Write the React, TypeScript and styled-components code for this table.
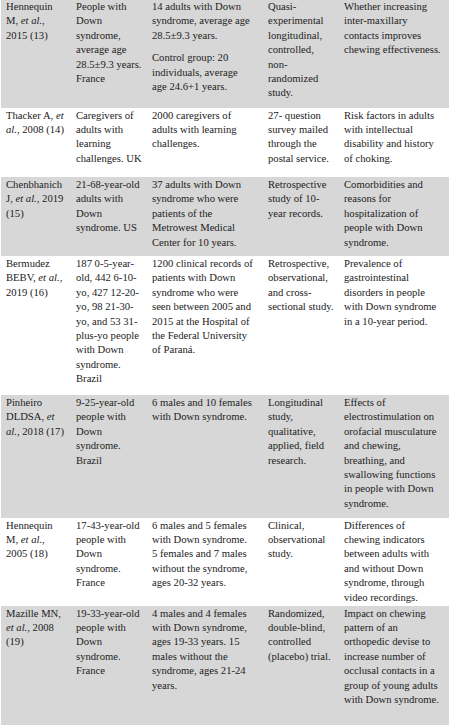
import React from 'react';
import styled, { createGlobalStyle } from 'styled-components';

const Global = createGlobalStyle`
  html, body { margin: 0; padding: 0; background: #ffffff; }
  body {
    font-family: "Liberation Serif", "Times New Roman", Times, serif;
    color: #222222;
  }
`;

const Page = styled.div`
  padding: 0 2px 0 1px;
  margin-top: -1px;
`;

const Row = styled.div<{ $shade: boolean; $h: number }>`
  display: grid;
  grid-template-columns: 70px 76px 116px 76px 110px;
  align-items: start;
  height: ${(p) => p.$h}px;
  background: ${(p) => (p.$shade ? '#d7d7d7' : '#ffffff')};
`;

const Cell = styled.div<{ $pr: number }>`
  padding: 1px ${(p) => p.$pr}px 0 5px;
  font-family: "Liberation Serif", "Times New Roman", Times, serif;
  font-size: 10.65px;
  line-height: 14.4px;
  color: #222222;
`;

const Para = styled.p<{ $gap: number }>`
  margin: 0 0 ${(p) => p.$gap}px 0;
`;

const Et = styled.em`
  font-style: italic;
`;

const PAD = [4, 3, 9, 4, 6.5];

type Study = {
  author: string;
  year: string;
  population: string;
  sample: { text: string; gap: number }[];
  design: string;
  aim: string;
  h: number;
};

const studies: Study[] = [
  {
    author: 'Hennequin M,',
    year: '2015 (13)',
    population: 'People with Down syndrome, average age 28.5±9.3 years. France',
    sample: [
      { text: '14 adults with Down syndrome, average age 28.5±9.3 years.', gap: 8 },
      { text: 'Control group: 20 individuals, average age 24.6+1 years.', gap: 0 },
    ],
    design: 'Quasi-experimental longitudinal, controlled, non-randomized study.',
    aim: 'Whether increasing inter-maxillary contacts improves chewing effectiveness.',
    h: 108.5,
  },
  {
    author: 'Thacker A,',
    year: '2008 (14)',
    population: 'Caregivers of adults with learning challenges. UK',
    sample: [{ text: '2000 caregivers of adults with learning challenges.', gap: 0 }],
    design: '27- question survey mailed through the postal service.',
    aim: 'Risk factors in adults with intellectual disability and history of choking.',
    h: 69.5,
  },
  {
    author: 'Chenbhanich J,',
    year: '2019 (15)',
    population: '21-68-year-old adults with Down syndrome. US',
    sample: [
      {
        text: '37 adults with Down syndrome who were patients of the Metrowest Medical Center for 10 years.',
        gap: 0,
      },
    ],
    design: 'Retrospective study of 10-year records.',
    aim: 'Comorbidities and reasons for hospitalization of people with Down syndrome.',
    h: 79,
  },
  {
    author: 'Bermudez BEBV,',
    year: '2019 (16)',
    population:
      '187 0-5-year-old, 442 6-10-yo, 427 12-20-yo, 98 21-30-yo, and 53 31-plus-yo people with Down syndrome. Brazil',
    sample: [
      {
        text: '1200 clinical records of patients with Down syndrome who were seen between 2005 and 2015 at the Hospital of the Federal University of Paraná.',
        gap: 0,
      },
    ],
    design: 'Retrospective, observational, and cross-sectional study.',
    aim: 'Prevalence of gastrointestinal disorders in people with Down syndrome in a 10-year period.',
    h: 139,
  },
  {
    author: 'Pinheiro DLDSA,',
    year: '2018 (17)',
    population: '9-25-year-old people with Down syndrome. Brazil',
    sample: [{ text: '6 males and 10 females with Down syndrome.', gap: 0 }],
    design: 'Longitudinal study, qualitative, applied, field research.',
    aim: 'Effects of electrostimulation on orofacial musculature and chewing, breathing, and swallowing functions in people with Down syndrome.',
    h: 122.5,
  },
  {
    author: 'Hennequin M,',
    year: '2005 (18)',
    population: '17-43-year-old people with Down syndrome. France',
    sample: [
      { text: '6 males and 5 females with Down syndrome.', gap: 0 },
      { text: '5 females and 7 males without the syndrome, ages 20-32 years.', gap: 0 },
    ],
    design: 'Clinical, observational study.',
    aim: 'Differences of chewing indicators between adults with and without Down syndrome, through video recordings.',
    h: 88,
  },
  {
    author: 'Mazille MN,',
    year: '2008 (19)',
    population: '19-33-year-old people with Down syndrome. France',
    sample: [
      {
        text: '4 males and 4 females with Down syndrome, ages 19-33 years. 15 males without the syndrome, ages 21-24 years.',
        gap: 0,
      },
    ],
    design: 'Randomized, double-blind, controlled (placebo) trial.',
    aim: 'Impact on chewing pattern of an orthopedic devise to increase number of occlusal contacts in a group of young adults with Down syndrome.',
    h: 119.5,
  },
];

export default function App() {
  return (
    <>
      <Global />
      <Page>
        {studies.map((s, i) => (
          <Row key={i} $shade={i % 2 === 0} $h={s.h}>
            <Cell $pr={PAD[0]}>
              {s.author} <Et>et al.</Et>, {s.year}
            </Cell>
            <Cell $pr={PAD[1]}>{s.population}</Cell>
            <Cell $pr={PAD[2]}>
              {s.sample.map((p, j) => (
                <Para key={j} $gap={p.gap}>
                  {p.text}
                </Para>
              ))}
            </Cell>
            <Cell $pr={PAD[3]}>{s.design}</Cell>
            <Cell $pr={PAD[4]}>{s.aim}</Cell>
          </Row>
        ))}
      </Page>
    </>
  );
}
